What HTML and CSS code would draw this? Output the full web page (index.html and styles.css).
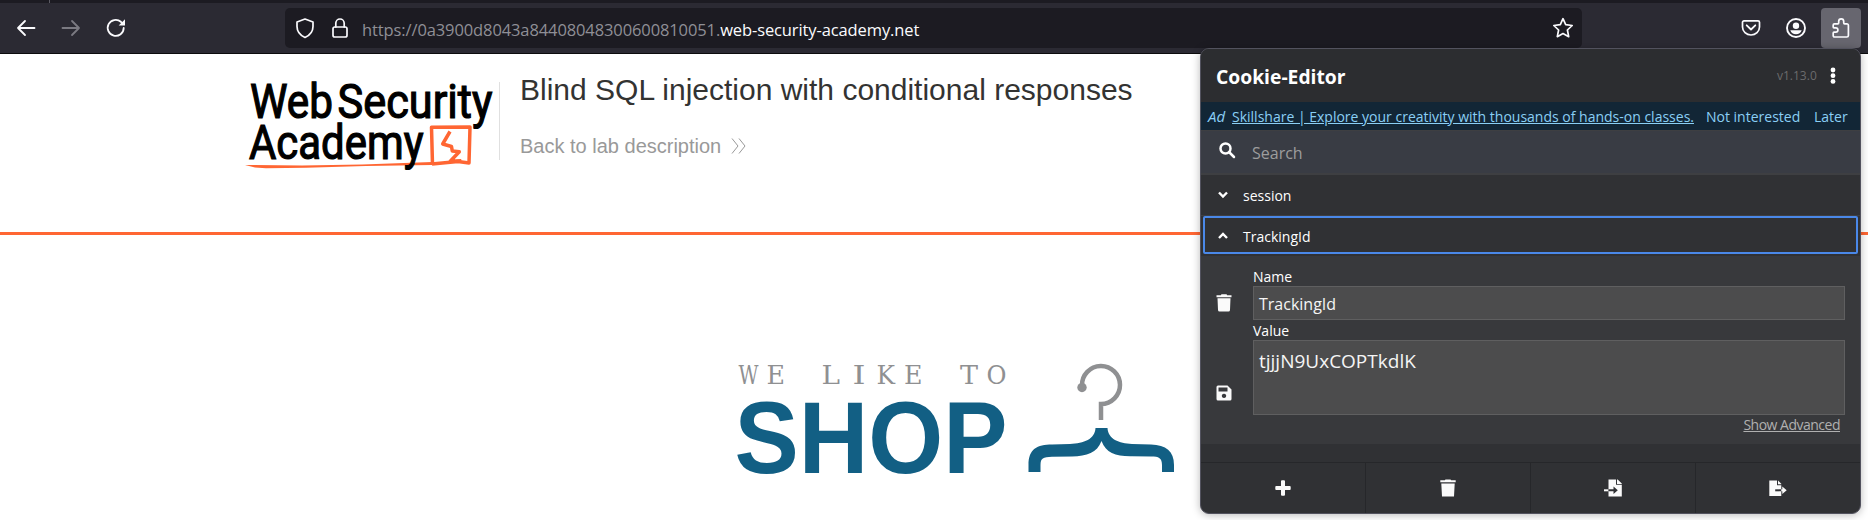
FILE: index.html
```html
<!DOCTYPE html>
<html lang="en">
<head>
<meta charset="utf-8">
<title>Blind SQL injection with conditional responses</title>
<link rel="stylesheet" href="styles.css">
</head>
<body>
<div class="tabstrip"><span class="tab-edge"></span></div>
<nav class="toolbar">
  <div class="nav-buttons">
    <svg class="icon" width="20" height="20" viewBox="0 0 20 20"><path d="M18.500 10H2M9 3 2 10l7 7" stroke-width="1.800"/></svg>
    <svg class="icon dim" width="20" height="20" viewBox="0 0 20 20"><path d="M1.500 10H18M11 3l7 7-7 7" stroke-width="1.800"/></svg>
    <svg class="icon" width="20" height="20" viewBox="0 0 20 20"><path d="M17.700 10a8 8 0 1 1-2.800-6.200l1.600 1.700" stroke-width="1.800"/><path class="solid" d="M19 1.200v6.300h-6.300z"/></svg>
  </div>
  <div class="urlbar">
    <svg class="icon shield" width="20" height="22" viewBox="0 0 20 22"><path d="M10 2 18 5v4.500c0 5-3.600 9-8 11-4.400-2-8-6-8-11V5z" stroke-width="1.700"/></svg>
    <svg class="icon lock" width="18" height="22" viewBox="0 0 18 22"><rect x="2" y="10" width="14" height="10" rx="1.800" stroke-width="1.700"/><path d="M4.800 10V6.200a4.200 4.200 0 0 1 8.400 0V10" stroke-width="1.700"/></svg>
    <span class="url"><span class="url-sub">https://0a3900d8043a84408048300600810051.</span><span class="url-host">web-security-academy.net</span></span>
    <svg class="icon star" width="22" height="22" viewBox="0 0 22 22"><path d="M11 1.700l2.700 6 6.500.8-4.800 4.500 1.300 6.700-5.700-3.200-5.700 3.200 1.300-6.700L1.800 8.500l6.500-.8z" stroke-width="1.700"/></svg>
  </div>
  <div class="tools">
    <svg class="icon pocket" width="20" height="20" viewBox="0 0 20 20"><path d="M3 2.800h14a1.500 1.500 0 0 1 1.500 1.500V9a8.500 8 0 0 1-17 0V4.300A1.500 1.500 0 0 1 3 2.800z" stroke-width="1.700"/><path d="M5.700 7.300 10 11.500l4.300-4.200" stroke-width="1.800"/></svg>
    <svg class="icon account" width="22" height="22" viewBox="0 0 22 22"><circle cx="11" cy="11" r="9" stroke-width="1.900"/><circle class="solid" cx="11" cy="8.700" r="3.200"/><path class="solid" d="M5.300 13.200h11.400c-.8 2.500-2.900 4-5.700 4s-4.900-1.500-5.700-4z"/></svg>
    <span class="ext"><svg class="icon" width="20" height="22" viewBox="0 0 20 22"><path d="M3.500 6.800h3.400c.7 0 .8-.5.8-1V4.300a2.500 2.500 0 0 1 5 0v1.500c0 .6.200 1 .9 1h2.200a1.600 1.600 0 0 1 1.600 1.600v10a1.600 1.600 0 0 1-1.600 1.600H3.500A1.300 1.300 0 0 1 2.200 18.700V16c0-.5.300-.8.800-.8h1.700a2.100 2.100 0 0 0 0-4.400H3c-.5 0-.8-.3-.8-.8V8c0-.7.500-1.200 1.300-1.200z" stroke-width="1.700"/></svg></span>
  </div>
</nav>

<header class="lab-header">
  <svg class="academy-logo" width="259" height="104" viewBox="0 0 259 104">
    <g class="logo-text">
      <text x="10" y="48" textLength="83" lengthAdjust="spacingAndGlyphs">Web</text>
      <text x="97.500" y="48" textLength="155" lengthAdjust="spacingAndGlyphs">Security</text>
    </g>
    <path class="orange" d="M5 95 62 95.500l60-1 70-2.500v3l-66 1-60 1.700-40 .5-11-.7z"/>
    <text class="logo-text" x="9" y="88.500" textLength="174.500" lengthAdjust="spacingAndGlyphs">Academy</text>
    <path class="mark" d="M192.500 94.500 191.500 57.300 230 57l-1 36L218 91.500 192 94"/>
    <path class="mark" d="M210 61.500l-7.300 12.500 8.800 2.500.8 4.500 7 .8-9 9.500 11-.5"/>
  </svg>
  <div class="lab-title">
    <h2>Blind SQL injection with conditional responses</h2>
    <a class="back">Back to lab description<svg width="16" height="18" viewBox="0 0 16 18"><path d="M1 1.500 7 9l-6 7.500M8 1.500 14 9l-6 7.500"/></svg></a>
  </div>
</header>

<main class="shop">
  <svg width="450" height="130" viewBox="0 0 450 130">
    <text class="tagline" y="33.500"><tspan x="8.500" textLength="20" lengthAdjust="spacingAndGlyphs">W</tspan><tspan x="36.500" textLength="18.500" lengthAdjust="spacingAndGlyphs">E</tspan> <tspan x="91.500" textLength="18.500" lengthAdjust="spacingAndGlyphs">L</tspan><tspan x="122.500" textLength="13" lengthAdjust="spacingAndGlyphs">I</tspan><tspan x="146.500" textLength="18.500" lengthAdjust="spacingAndGlyphs">K</tspan><tspan x="174" textLength="18.500" lengthAdjust="spacingAndGlyphs">E</tspan> <tspan x="230" textLength="18" lengthAdjust="spacingAndGlyphs">T</tspan><tspan x="256.500" textLength="20" lengthAdjust="spacingAndGlyphs">O</tspan></text>
    <text class="brand" x="4.500" y="122.500" textLength="273" lengthAdjust="spacingAndGlyphs">SHOP</text>
    <path class="hook" d="M352 38V35.500A19 19 0 1 1 371 54V70"/>
    <circle class="ball" cx="352" cy="37.500" r="4.700"/>
    <path class="hanger" d="M298.500 122V115C298.500 99 307 94.500 322 94.500L340 94C354 93.500 365 89 365.500 78H377.500C378 89 389 93.500 402 94L421 94.500C436 95 444 101 444 115V122H432V115C432 108 429 106.500 421 106.500L402 106.200C386 106.500 376 103 371.500 91C367 103 357 106 342 106.500L322 106.700C313 107 310.500 108 310.500 115V122Z"/>
  </svg>
</main>

<aside class="popup">
  <div class="popup-head"><h1>Cookie-Editor</h1><span class="version">v1.13.0</span>
    <svg class="dots" width="6" height="18" viewBox="0 0 6 18"><circle cx="3" cy="3" r="2.400"/><circle cx="3" cy="8.700" r="2.400"/><circle cx="3" cy="14.400" r="2.400"/></svg>
  </div>
  <div class="ad"><i>Ad</i><a class="ad-link">Skillshare | Explore your creativity with thousands of hands-on classes.</a><span class="not">Not interested</span><span class="later">Later</span></div>
  <div class="search"><svg width="16" height="16" viewBox="0 0 16 16"><circle cx="6.500" cy="6.500" r="5"/><path d="M10 10l5 5"/></svg><span>Search</span></div>
  <div class="row"><svg width="10" height="8" viewBox="0 0 10 8"><path d="M1 1.500l4 4 4-4"/></svg><span>session</span></div>
  <div class="row active"><svg width="10" height="8" viewBox="0 0 10 8"><path d="M1 6l4-4 4 4"/></svg><span>TrackingId</span></div>
  <div class="editor">
    <div class="actions">
      <svg class="fa" width="16" height="18" viewBox="0 0 16 18"><path d="M.5 1.300h4.300L5.500.3h5l.7 1h4.300v2H.5zM1.500 4.300h13L14 16q-.1 1.500-1.500 1.500h-9Q2.100 17.500 2 16z"/></svg>
      <svg class="fa" width="16" height="16" viewBox="0 0 16 16"><path fill-rule="evenodd" d="M2 .5h9.500l4 4V14q0 1.500-1.500 1.500H2Q.5 15.500.5 14V2Q.5.500 2 .5zM2.500 2.500v4h9v-4zM8 8.700a2.200 2.200 0 1 0 .01 0z"/></svg>
    </div>
    <div class="fields">
      <label>Name</label>
      <div class="input">TrackingId</div>
      <label class="second">Value</label>
      <div class="textarea">tjjjN9UxCOPTkdlK</div>
      <a class="advanced">Show Advanced</a>
    </div>
  </div>
  <div class="footer">
    <div><svg class="fa" width="16" height="16" viewBox="0 0 16 16"><path d="M7 .3h2q1 0 1 1V6h4.800q.9 0 .9 1v2q0 1-.9 1H10v4.700q0 1-1 1H7q-1 0-1-1V10H1.200q-.9 0-.9-1V7q0-1 .9-1H6V1.300q0-1 1-1z"/></svg></div>
    <div><svg class="fa" width="16" height="18" viewBox="0 0 16 18"><path d="M.3 1.300h4.500L5.500.5h5l.7.8h4.500v2H.3zM1.300 4.500h13.400L14 17.400H2z"/></svg></div>
    <div><svg class="fa" width="18" height="18" viewBox="0 0 18 18"><path d="M4.500.5H12v5.300h5.800V17.500H4.500zM13 .5h.7l4.100 4.100v.4H13z"/><path d="M0 10.300h4.500v2H0z"/><path class="cut" d="M4.500 10.300h5V7.500l4.300 3.800-4.300 3.800v-2.800h-5z"/></svg></div>
    <div><svg class="fa" width="18" height="18" viewBox="0 0 18 18"><path d="M.3 1.500H8v4.800h4.300V17H.3zM9 1.500l3.300 3.300v.5H9z"/><path class="cut" d="M6.200 10.300h6.100v2H6.200z"/><path d="M12.300 10.300h1V7.500l4.400 3.800-4.400 3.800v-2.800h-1z"/></svg></div>
  </div>
</aside>
</body>
</html>
```
FILE: styles.css
```css
* { box-sizing: border-box; }
body { margin: 0; width: 1868px; height: 520px; overflow: hidden; background: #fff; position: relative; font-family: "Open Sans", "Noto Sans", sans-serif; }
svg { display: block; flex: none; overflow: visible; }
h1, h2 { margin: 0; }
.tabstrip { height: 3px; background: #1c1b22; padding-left: 49px; }
.tab-edge { display: block; width: 1px; height: 3px; background: #5b5a63; }
.toolbar { height: 51px; background: #2b2a33; border-bottom: 1px solid #0c0c0d; display: flex; padding-top: 5px; }
.icon { fill: none; stroke: #fbfbfe; stroke-linecap: round; stroke-linejoin: round; }
.icon .solid { fill: #fbfbfe; stroke: none; }
.dim { stroke: #7b7a82; }
.nav-buttons { display: flex; align-items: center; gap: 25px; width: 285px; height: 40px; padding-left: 16px; }
.urlbar { width: 1297px; height: 40px; background: #1c1b22; border-radius: 5px; display: flex; align-items: center; padding: 0 8px 0 10px; }
.lock { margin-left: 16px; }
.url { flex: 1; margin-left: 13px; font-size: 16.500px; white-space: nowrap; padding-top: 3px; }
.url-sub { color: #8f8f96; letter-spacing: -0.110px; }
.url-host { color: #fbfbfe; letter-spacing: -0.110px; }
.tools { display: flex; align-items: center; height: 40px; padding-left: 159px; }
.account { margin-left: 24px; }
.ext { width: 40px; height: 40px; margin-left: 14px; border-radius: 4px; background: #67666f; display: flex; align-items: center; justify-content: center; }
.lab-header { height: 181px; border-bottom: 3px solid #f63; padding: 16px 0 0 240px; display: flex; }
.logo-text { font: 400 47.500px Roboto, sans-serif; fill: #000; stroke: #000; stroke-width: 1.200; }
.orange { fill: #f63; }
.mark { fill: none; stroke: #f63; stroke-width: 3.500; stroke-linejoin: round; }
.lab-title { height: 78px; margin-top: 12px; padding-left: 20px; border-left: 1px solid #e0e0e0; font-family: "Liberation Sans", Arial, sans-serif; }
.lab-title h2 { margin-top: -9px; font-size: 30px; line-height: 34px; font-weight: 400; color: #333332; white-space: nowrap; }
.back { display: flex; align-items: center; gap: 10px; margin-top: 27px; font-size: 20px; line-height: 24px; color: #999; }
.back svg { fill: none; stroke: #999; stroke-width: 1; }
.shop { padding: 115px 0 0 730px; }
.tagline { font: 26px "DejaVu Serif", serif; fill: #8f9092; }
.brand { font: bold 101.500px "Liberation Sans", Arial, sans-serif; fill: #125f84; }
.hook { fill: none; stroke: #8f9092; stroke-width: 4.500; }
.ball { fill: #8f9092; }
.hanger { fill: #125f84; }
.popup { position: absolute; left: 1200px; top: 48px; width: 661px; height: 466px; background: #303134; border: 1px solid #52525e; border-radius: 9px; overflow: hidden; box-shadow: 0 1px 8px rgba(0,0,0,.28); color: #fff; font-size: 14px; white-space: nowrap; }
.popup-head { height: 53px; background: #2c2d30; display: flex; align-items: center; padding-left: 15px; }
.popup-head h1 { font-size: 19.300px; line-height: 26px; width: 561px; padding-top: 3px; }
.version { width: 53px; color: #6b6b6c; font-size: 12px; }
.dots { fill: #fff; margin-top: 1px; }
.ad { height: 28px; background: #122636; color: #8acff5; display: flex; align-items: center; padding-left: 7px; }
.ad i { width: 24px; font-size: 15px; }
.ad-link { width: 474px; text-decoration: underline; }
.not { width: 108px; }
.search { height: 45px; background: #393c44; border: solid #3e3f42; border-width: 1px 0 2px; display: flex; align-items: center; padding-left: 18px; color: #9d9d9d; font-size: 16px; }
.search svg { fill: none; stroke: #fff; stroke-width: 2.500; stroke-linecap: round; margin-top: -5px; }
.search span { margin-left: 17px; padding-top: 2px; }
.row { height: 41px; display: flex; align-items: center; padding-left: 17px; border-bottom: 1px solid #3e3f42; }
.row svg { fill: none; stroke: #fff; stroke-width: 2.400; margin-top: -1px; }
.row span { margin-left: 15px; }
.active { height: 38px; margin: 0 2px; padding: 2px 0 0 13px; border: 2px solid #4a88e8; border-radius: 2px; }
.editor { height: 190px; background: #38393c; border-top: 2px solid #303134; display: flex; padding-left: 15px; }
.actions { width: 37px; padding-top: 38px; display: flex; flex-direction: column; gap: 73px; }
.fa { fill: #fafafa; }
.fa .cut { fill: #303134; }
.fields { width: 592px; display: flex; flex-direction: column; }
label { height: 30px; padding-top: 12px; line-height: 18px; }
.second { height: 20px; padding-top: 2px; }
.input, .textarea { border: 1px solid #5f5f60; background: #4c4c4d; color: #f5f5f5; padding-left: 5px; }
.input { height: 34px; line-height: 34px; font-size: 16px; }
.textarea { height: 75px; padding-top: 7px; line-height: 27px; font-size: 19px; }
.advanced { align-self: flex-end; margin-right: 5px; color: #b0b0b0; text-decoration: underline; line-height: 20px; letter-spacing: -.5px; }
.footer { height: 51px; margin-top: 18px; border-top: 1px solid #26272a; display: flex; }
.footer div { width: 165px; display: flex; align-items: center; justify-content: center; border-left: 1px solid #26272a; padding-right: 1px; }
.footer div:first-child { width: 164px; border-left: 0; padding: 0; }
```
